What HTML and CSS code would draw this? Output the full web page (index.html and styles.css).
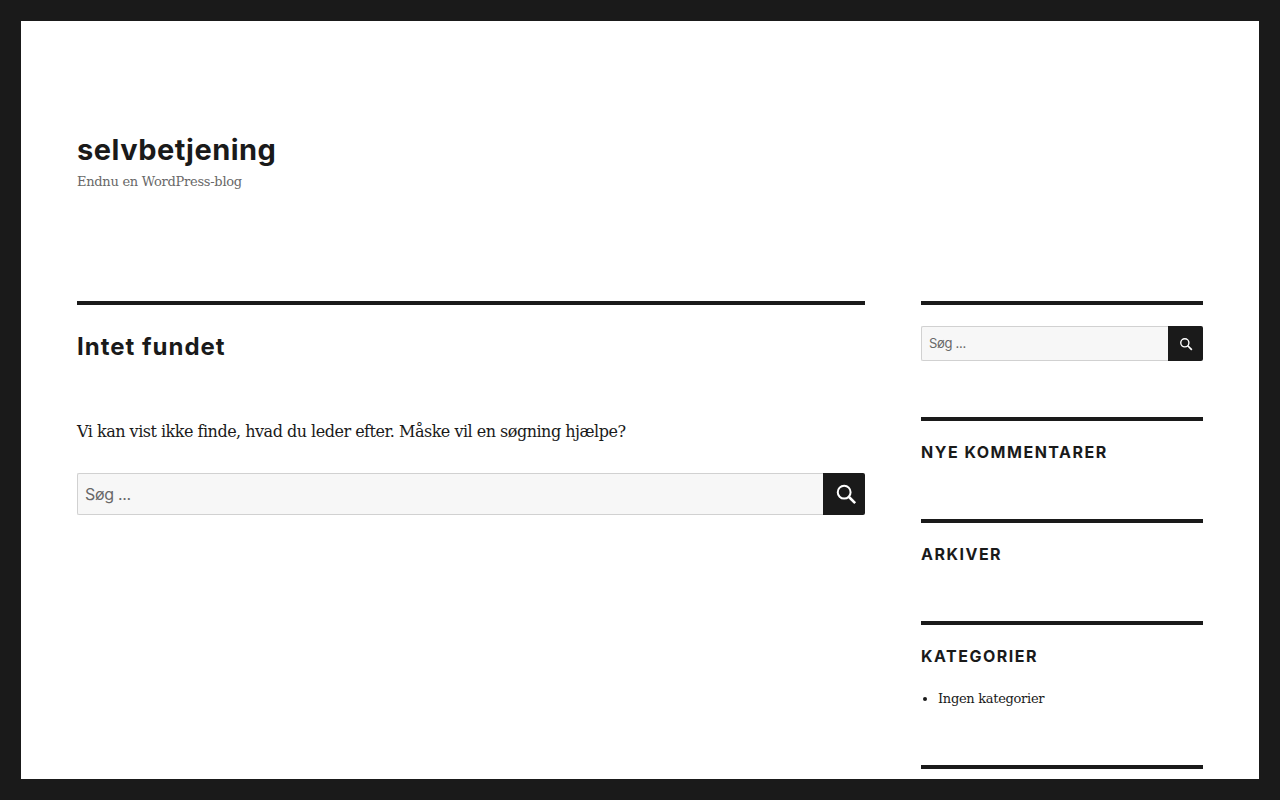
FILE: index.html
```html
<!DOCTYPE html>
<html lang="da">
<head>
  <meta charset="UTF-8" />
  <meta name="viewport" content="width=device-width, initial-scale=1.0" />
  <title>selvbetjening</title>
  <link rel="stylesheet" href="styles.css">
</head>
<body>
<div class="frame frame-top"></div>
<div class="frame frame-bottom"></div>
<div class="frame frame-left"></div>
<div class="frame frame-right"></div>
<div class="site">
  <header class="site-header">
    <p class="site-title">selvbetjening</p>
    <p class="site-description">Endnu en WordPress-blog</p>
  </header>
  <div class="site-inner">
    <main class="content">
      <h1 class="page-title">Intet fundet</h1>
      <p class="notice">Vi kan vist ikke finde, hvad du leder efter. Måske vil en søgning hjælpe?</p>
      <form class="search search-large">
        <input type="search" placeholder="Søg ..." />
        <button type="button" aria-label="Søg">
          <svg viewBox="0 0 24 24" width="22" height="22"><circle cx="10" cy="10" r="7" fill="none" stroke="#fff" stroke-width="2.2"/><path d="M15 15 L22 22" stroke="#fff" stroke-width="2.8" fill="none"/></svg>
        </button>
      </form>
    </main>
    <aside class="sidebar">
      <section class="widget widget-search">
        <form class="search search-small">
          <input type="search" placeholder="Søg ..." />
          <button type="button" aria-label="Søg">
            <svg viewBox="0 0 24 24" width="14" height="14"><circle cx="10" cy="10" r="7" fill="none" stroke="#fff" stroke-width="2.4"/><path d="M15 15 L22 22" stroke="#fff" stroke-width="3" fill="none"/></svg>
          </button>
        </form>
      </section>
      <section class="widget">
        <h2 class="widget-title">Nye kommentarer</h2>
      </section>
      <section class="widget">
        <h2 class="widget-title">Arkiver</h2>
      </section>
      <section class="widget widget-list">
        <h2 class="widget-title">Kategorier</h2>
        <ul>
          <li>Ingen kategorier</li>
        </ul>
      </section>
      <section class="widget"></section>
    </aside>
  </div>
</div>
</body>
</html>
```

FILE: styles.css
```css
html, body {
  margin: 0;
  height: 100%;
  overflow: hidden;
}
body {
  background: #1a1a1a;
  color: #1a1a1a;
  font-family: "DejaVu Serif", serif;
}
.frame {
  position: fixed;
  background: #1a1a1a;
  z-index: 10;
}
.frame-top { top: 0; left: 0; right: 0; height: 21px; }
.frame-bottom { bottom: 0; left: 0; right: 0; height: 21px; }
.frame-left { top: 0; bottom: 0; left: 0; width: 21px; }
.frame-right { top: 0; bottom: 0; right: 0; width: 21px; }
.site {
  margin: 21px;
  background: #fff;
  height: 900px;
}
.site-header {
  padding: 111px 56px 0;
  height: 169px;
}
.site-title {
  margin: 0;
  font-family: Inter, sans-serif;
  font-size: 29px;
  font-weight: 700;
  line-height: 35px;
  letter-spacing: 0.5px;
}
.site-description {
  margin: 4px 0 0;
  color: #686868;
  font-size: 13px;
  line-height: 21px;
  letter-spacing: -0.27px;
}
.site-inner {
  display: flex;
  justify-content: space-between;
  padding: 0 56px;
}
.content {
  width: 788px;
  border-top: 4px solid #1a1a1a;
}
.page-title {
  margin: 0;
  padding-top: 27px;
  font-family: Inter, sans-serif;
  font-size: 24px;
  font-weight: 700;
  line-height: 30px;
  letter-spacing: 1px;
}
.notice {
  margin: 55px 0 0;
  font-size: 16px;
  line-height: 29px;
  letter-spacing: -0.5px;
}
.search {
  display: flex;
}
.search input {
  flex: 1;
  min-width: 0;
  box-sizing: border-box;
  height: 100%;
  margin: 0;
  padding: 0 7px;
  background: #f7f7f7;
  border: 1px solid #d1d1d1;
  border-right: none;
  border-radius: 2px 0 0 2px;
  color: #686868;
  font-family: Inter, sans-serif;
  letter-spacing: -0.3px;
  outline: none;
  -webkit-appearance: none;
}
.search input::placeholder {
  color: #686868;
  opacity: 1;
}
.search button {
  display: flex;
  align-items: center;
  justify-content: center;
  padding: 0;
  background: #1a1a1a;
  border: none;
  border-radius: 0 2px 2px 0;
}
.search-large {
  height: 42px;
  margin-top: 27px;
}
.search-large input {
  font-size: 16px;
}
.search-large button {
  width: 42px;
}
.search-large svg {
  margin-left: 3px;
}
.search-small {
  height: 35px;
}
.search-small input {
  padding-bottom: 2px;
  font-size: 13px;
}
.search-small button {
  width: 35px;
}
.sidebar {
  width: 282px;
}
.widget {
  border-top: 4px solid #1a1a1a;
  padding-top: 21px;
  margin-bottom: 56px;
}
.widget-title {
  margin: 0;
  height: 21px;
  font-family: Inter, sans-serif;
  font-size: 16px;
  font-weight: 700;
  line-height: 21px;
  letter-spacing: 1.5px;
  text-transform: uppercase;
}
.widget-list ul {
  margin: 21px 0 0;
  padding: 0 0 0 17px;
  font-size: 13px;
  line-height: 21px;
  letter-spacing: -0.3px;
}
```
